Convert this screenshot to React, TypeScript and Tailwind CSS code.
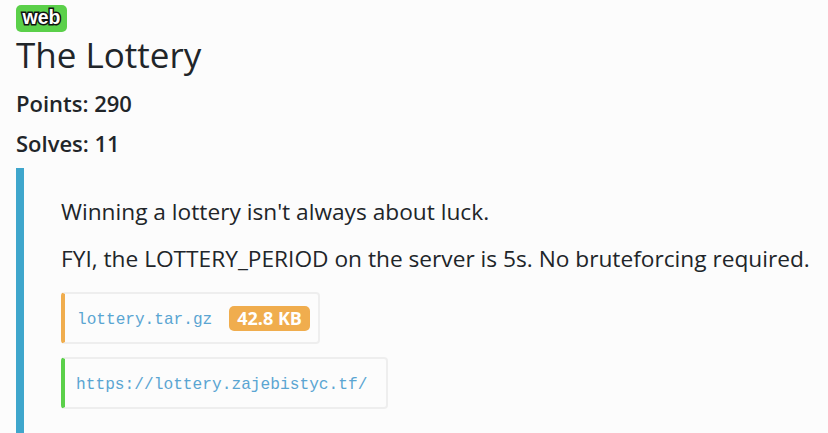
export default function App() {
  return (
    <div
      className="min-h-screen bg-[#fcfcfc] px-4 pt-[5px] text-[#212529]"
      style={{ fontFamily: '"Open Sans", "Noto Sans", sans-serif' }}
    >
      {/* Category badge */}
      <span
        className="inline-flex h-[27px] w-[51px] items-center justify-center rounded-[5px] bg-[#5bd04a] pb-[1px] text-[19.5px] font-bold leading-none text-white"
        style={{
          fontFamily: '"Liberation Sans", Arial, sans-serif',
          WebkitTextStroke: '3px #111',
          paintOrder: 'stroke fill',
        }}
      >
        web
      </span>

      <h1 className="mt-[1px] text-[35px] font-medium leading-[44px]">The Lottery</h1>
      <p className="mt-[12px] text-[22px] font-semibold leading-[28px]">Points: 290</p>
      <p className="mt-[12px] text-[22px] font-semibold leading-[28px]">Solves: 11</p>

      {/* Description block */}
      <div className="mt-[11px] border-l-8 border-[#3fa6cc] pb-6 pl-[37px] pt-[28px]">
        <p className="whitespace-nowrap text-[22.7px] leading-[32px]">Winning a lottery isn't always about luck.</p>
        <p className="mt-[15px] whitespace-nowrap text-[22.7px] leading-[32px]">
          FYI, the LOTTERY_PERIOD on the server is 5s. No bruteforcing required.
        </p>

        <div className="mt-[17px] flex flex-col items-start gap-[13px]">
          <div className="flex h-[52px] items-center gap-[17px] rounded-[4px] border-2 border-l-4 border-[#eeeeee] border-l-[#f0ad4e] pl-[12px] pr-[8px]">
            <span
              className="mt-[5px] text-[16.1px] text-[#5aa5d2]"
              style={{ fontFamily: '"Liberation Mono", monospace' }}
            >
              lottery.tar.gz
            </span>
            <span className="rounded-[5px] bg-[#f0ad4e] px-[8px] text-[18px] font-bold leading-[25px] text-white">
              42.8 KB
            </span>
          </div>
          <div className="flex h-[52px] items-center rounded-[4px] border-2 border-l-4 border-[#eeeeee] border-l-[#5bd04a] pl-[11px] pr-[19px]">
            <span
              className="mt-[5px] text-[16.2px] text-[#5aa5d2]"
              style={{ fontFamily: '"Liberation Mono", monospace' }}
            >
              https://lottery.zajebistyc.tf/
            </span>
          </div>
        </div>
      </div>
    </div>
  );
}
